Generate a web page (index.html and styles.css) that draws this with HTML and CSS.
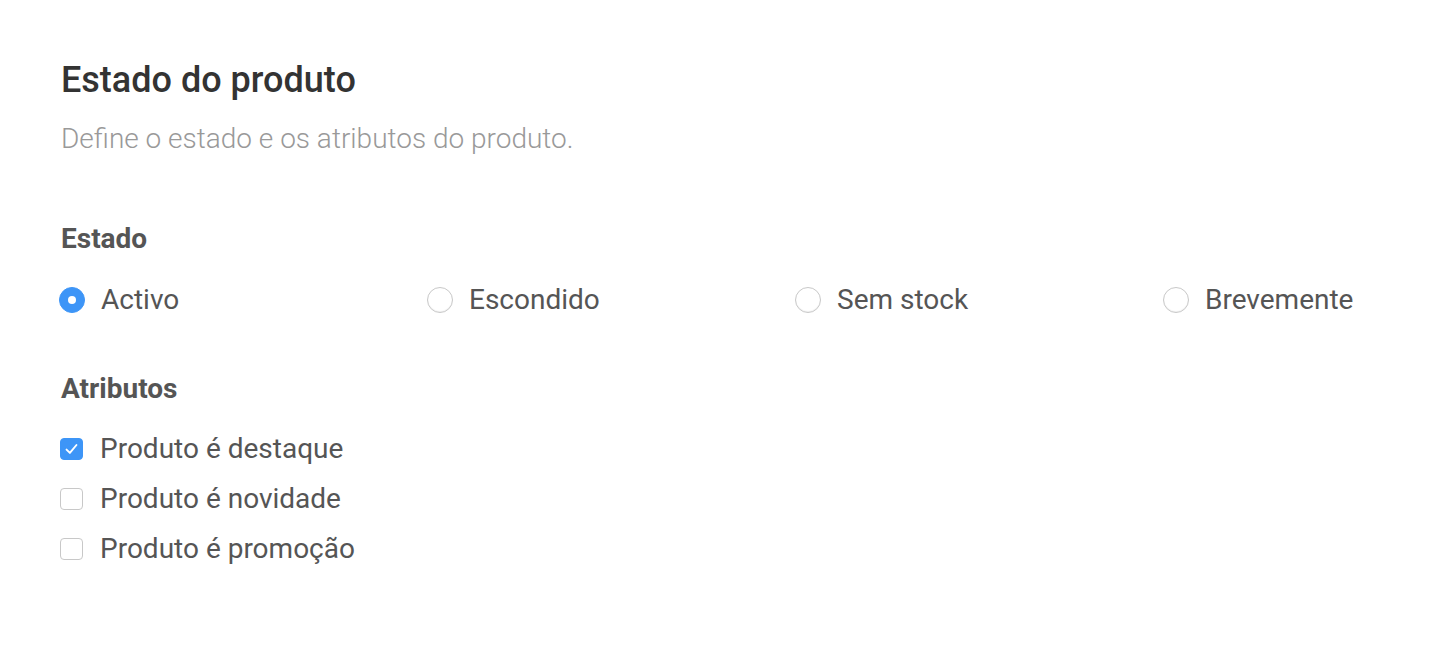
FILE: index.html
```html
<!DOCTYPE html>
<html lang="pt">
<head>
<meta charset="utf-8">
<title>Estado do produto</title>
<link rel="stylesheet" href="styles.css">
</head>
<body>
<main class="panel">
  <h1 class="title">Estado do produto</h1>
  <p class="subtitle">Define o estado e os atributos do produto.</p>

  <section class="group group-state">
    <h2 class="group-label">Estado</h2>
    <div class="radio-row">
      <label class="option"><span class="radio radio-on"></span>Activo</label>
      <label class="option"><span class="radio"></span>Escondido</label>
      <label class="option"><span class="radio"></span>Sem stock</label>
      <label class="option"><span class="radio"></span>Brevemente</label>
    </div>
  </section>

  <section class="group group-attrs">
    <h2 class="group-label">Atributos</h2>
    <div class="check-list">
      <label class="option"><span class="check check-on"><svg viewBox="0 0 22 22" width="22" height="22"><path d="M5.8 11.6 L9.3 15.1 L16.2 6.8" fill="none" stroke="#fff" stroke-width="2" stroke-linecap="round" stroke-linejoin="round"/></svg></span>Produto é destaque</label>
      <label class="option"><span class="check"></span>Produto é novidade</label>
      <label class="option"><span class="check"></span>Produto é promoção</label>
    </div>
  </section>
</main>
</body>
</html>
```

FILE: styles.css
```css
* { box-sizing: border-box; }
html, body { margin: 0; padding: 0; background: #fff; }
body { font-family: Roboto, "Noto Sans", sans-serif; color: #555; }

.panel {
  padding: 58px 0 0 61px;
  display: flex;
  flex-direction: column;
}

.title {
  margin: 0;
  font-size: 36px;
  line-height: 44px;
  font-weight: 500;
  color: #333;
}

.subtitle {
  margin: 19px 0 0;
  font-size: 28px;
  line-height: 36px;
  font-weight: 300;
  color: #999;
}

.group-state { margin-top: 64px; }
.group-attrs { margin-top: 53px; }

.group-label {
  margin: 0;
  font-size: 28px;
  line-height: 36px;
  font-weight: 700;
  color: #555;
}

.radio-row {
  margin-top: 25px;
  margin-left: -2px;
  display: grid;
  grid-template-columns: 368px 368px 368px auto;
}

.check-list {
  margin-top: 24px;
  margin-left: -1px;
  display: flex;
  flex-direction: column;
  gap: 14px;
}

.option {
  display: flex;
  align-items: center;
  font-size: 28px;
  line-height: 36px;
  color: #555;
}

.radio {
  width: 26px;
  height: 26px;
  border-radius: 50%;
  border: 1px solid #c8c8c8;
  background: #fff;
  box-shadow: inset 0 -1px 1px rgba(0,0,0,0.06);
  margin-right: 16px;
  flex: none;
  position: relative;
}
.radio-on {
  border-color: #3d95f7;
  background: #3d95f7;
  box-shadow: none;
}
.radio-on::after {
  content: "";
  position: absolute;
  left: 50%;
  top: 50%;
  width: 8px;
  height: 8px;
  margin: -4px 0 0 -4px;
  border-radius: 50%;
  background: #fff;
}

.check {
  width: 23px;
  height: 22px;
  border-radius: 4px;
  border: 1px solid #c8c8c8;
  background: #fff;
  margin-right: 17px;
  flex: none;
  display: flex;
  align-items: center;
  justify-content: center;
}
.check svg { display: block; }
.check-on {
  border-color: #3d95f7;
  background: #3d95f7;
}
```
